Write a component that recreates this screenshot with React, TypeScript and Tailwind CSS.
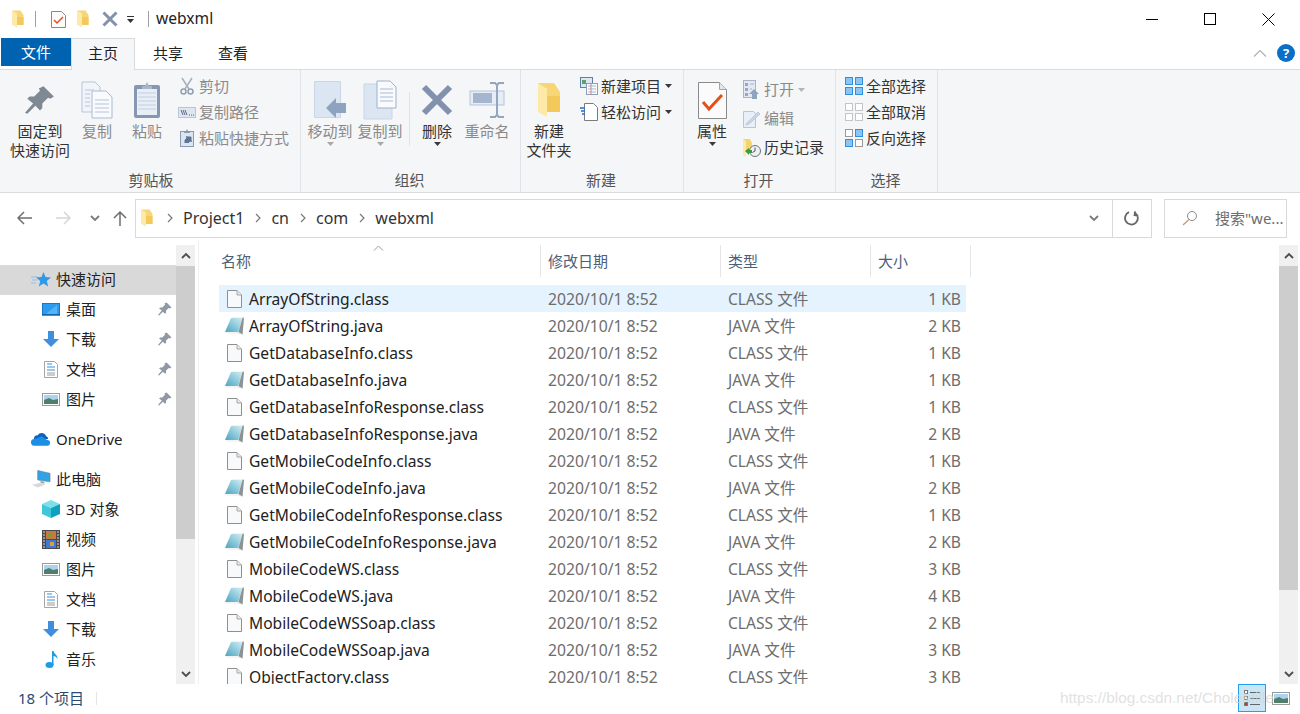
import type { ReactNode } from 'react'

const FONT = "font-['Noto_Sans','Noto_Sans_CJK_SC',sans-serif]"

const FILES = [
  ['ArrayOfString.class', 'CLASS 文件', '1 KB'],
  ['ArrayOfString.java', 'JAVA 文件', '2 KB'],
  ['GetDatabaseInfo.class', 'CLASS 文件', '1 KB'],
  ['GetDatabaseInfo.java', 'JAVA 文件', '1 KB'],
  ['GetDatabaseInfoResponse.class', 'CLASS 文件', '1 KB'],
  ['GetDatabaseInfoResponse.java', 'JAVA 文件', '2 KB'],
  ['GetMobileCodeInfo.class', 'CLASS 文件', '1 KB'],
  ['GetMobileCodeInfo.java', 'JAVA 文件', '2 KB'],
  ['GetMobileCodeInfoResponse.class', 'CLASS 文件', '1 KB'],
  ['GetMobileCodeInfoResponse.java', 'JAVA 文件', '2 KB'],
  ['MobileCodeWS.class', 'CLASS 文件', '3 KB'],
  ['MobileCodeWS.java', 'JAVA 文件', '4 KB'],
  ['MobileCodeWSSoap.class', 'CLASS 文件', '2 KB'],
  ['MobileCodeWSSoap.java', 'JAVA 文件', '3 KB'],
  ['ObjectFactory.class', 'CLASS 文件', '3 KB'],
]

/* ---------- icons ---------- */

function Folder({ w = 12, h = 18 }: { w?: number; h?: number }) {
  return (
    <svg width={w} height={h} viewBox="0 0 24 36">
      <path d="M1 1h16l6 9v20H1z" fill="#f6d675" />
      <path d="M1 1l9 6v28l-9-5z" fill="#fdeaa8" />
      <path d="M10 14h13v16H10z" fill="#f3c95c" />
    </svg>
  )
}

function ClassFile() {
  return (
    <svg width="15" height="18" viewBox="0 0 15 18">
      <path d="M.5.5h9.500l4.500 4.500v12.500H.5z" fill="#f8f9fb" stroke="#8f8f8f" />
      <path d="M10 .5V5h4.500" fill="#e8e8e8" stroke="#a8a8a8" />
    </svg>
  )
}

function JavaFile() {
  return (
    <svg width="20" height="18" viewBox="0 0 20 18">
      <defs>
        <linearGradient id="javaSheet" x1="1" y1="0" x2="0" y2="1">
          <stop offset="0" stopColor="#d4ecf1" />
          <stop offset="0.5" stopColor="#8ccadb" />
          <stop offset="1" stopColor="#4fa3bf" />
        </linearGradient>
      </defs>
      <path d="M7 0.500h12l-1.500 17-15-1.500z" fill="#e6e9ea" />
      <path d="M6 1h11.500L13 15H0z" fill="url(#javaSheet)" />
      <path d="M17.500 1l1.500-.5-1.500 17-4-2.500z" fill="#8b9396" />
      <path d="M0 15h13l.5 2H3z" fill="#f2f4f5" />
    </svg>
  )
}

function Pin({ size = 14, color = '#8f98a3' }: { size?: number; color?: string }) {
  return (
    <svg width={size} height={size} viewBox="0 0 26 26">
      <path d="M16 1l9 9-3 2-2-1-5 5 0 4-2 2-4-4-7 7-2-1 7-8-5-4 2-2 4 0 5-5-1-2z" fill={color} />
    </svg>
  )
}

function CopyDocs() {
  return (
    <svg width="32" height="38" viewBox="0 0 32 38">
      <path d="M1 1h13l5 5v25H1z" fill="#f1f5fa" stroke="#b7c5d9" />
      <path d="M11 10h14l6 6v21H11z" fill="#f8fafd" stroke="#a9bad2" />
      <path d="M4 9h9M4 13h5M4 17h5M4 21h5M4 25h5M14 19h14M14 23h14M14 27h14M14 31h14" stroke="#b4c4da" />
    </svg>
  )
}

function Clipboard() {
  return (
    <svg width="28" height="38" viewBox="0 0 28 38">
      <rect x="1" y="4" width="26" height="33" rx="2" fill="#8696b3" />
      <rect x="4" y="8" width="20" height="26" fill="#e8eef6" />
      <path d="M5 12h18M5 16h18M5 20h18M5 24h18M5 28h18" stroke="#c2cfe1" />
      <path d="M9 5h3l2-4 2 4h3v3H9z" fill="#a9b6ca" />
    </svg>
  )
}

function Scissors() {
  return (
    <svg width="14" height="18" viewBox="0 0 14 18">
      <path d="M2 1l7 11M12 1L5 12" stroke="#a9b2bf" strokeWidth="1.6" fill="none" />
      <circle cx="3.5" cy="14.5" r="2.5" fill="none" stroke="#8f9eb5" strokeWidth="1.5" />
      <circle cx="10.5" cy="14.5" r="2.5" fill="none" stroke="#8f9eb5" strokeWidth="1.5" />
    </svg>
  )
}

function PathIcon() {
  return (
    <svg width="18" height="11" viewBox="0 0 18 11">
      <rect x="0.5" y="0.5" width="17" height="10" fill="#dfe6f1" stroke="#b9c6da" />
      <path d="M3 3l2 5M5 3l2 5M7 3l2 5" stroke="#5d6d84" />
      <path d="M11 8h1M13 8h1M15 8h1" stroke="#5d6d84" />
    </svg>
  )
}

function PasteShortcut() {
  return (
    <svg width="14" height="18" viewBox="0 0 14 18">
      <rect x="0.5" y="2.5" width="13" height="15" fill="#dde5f0" stroke="#8b9ab3" />
      <path d="M4 2h2l1-2 1 2h2v2H4z" fill="#8b9ab3" />
      <path d="M5 14v-3l3-3H6h5v5-2l-3 3" fill="#5e7595" stroke="#5e7595" />
    </svg>
  )
}

function MoveTo() {
  return (
    <svg width="32" height="38" viewBox="0 0 32 38">
      <path d="M.5.5h26v36H.5z" fill="#dce6f3" stroke="#c9d6e8" />
      <path d="M32 22H22v-5L12 27l10 10v-5h10z" fill="#8ea3bf" />
    </svg>
  )
}

function CopyTo() {
  return (
    <svg width="34" height="40" viewBox="0 0 34 40">
      <path d="M1 4h28v35H1z" fill="#dce6f3" stroke="#c9d6e8" />
      <path d="M14 1h13l6 6v21H14z" fill="#f8fafd" stroke="#9fb1ca" />
      <path d="M17 9h13M17 13h13M17 17h13M17 21h13" stroke="#a9bad2" />
    </svg>
  )
}

function DeleteX({ size = 32 }: { size?: number }) {
  return (
    <svg width={size} height={size} viewBox="0 0 32 32">
      <path d="M3 3l26 26M29 3L3 29" stroke="#8291ae" strokeWidth="6" />
    </svg>
  )
}

function Rename() {
  return (
    <svg width="36" height="38" viewBox="0 0 36 38">
      <rect x="1" y="10" width="34" height="14" fill="#e6edf6" stroke="#b6c5da" />
      <rect x="4" y="12" width="19" height="10" fill="#a5b5ce" />
      <path d="M21 2h5l2 2 2-2h5M28 4v30M21 36h5l2-2 2 2h5" stroke="#93a5bf" strokeWidth="2" fill="none" />
    </svg>
  )
}

function NewItem() {
  return (
    <svg width="18" height="18" viewBox="0 0 18 18">
      <rect x="0.5" y="0.5" width="12" height="10" fill="#dbe7f4" stroke="#5f7fa3" />
      <rect x="2" y="3" width="4" height="4" fill="#5f9e6e" />
      <rect x="6.5" y="6.5" width="11" height="11" fill="#fff" stroke="#8f9cb0" />
      <path d="M11 6v12" stroke="#d77" />
      <path d="M8 9h8M8 12h8M8 15h8" stroke="#9db4d4" />
    </svg>
  )
}

function EasyAccess() {
  return (
    <svg width="18" height="18" viewBox="0 0 18 18">
      <path d="M4.5.5h9l4 4v13h-13z" fill="#fff" stroke="#7c7c7c" />
      <path d="M0 5h5M1 8h4M2 11h3" stroke="#2a6fc9" strokeWidth="1.3" />
    </svg>
  )
}

function Properties() {
  return (
    <svg width="29" height="37" viewBox="0 0 29 37">
      <path d="M.5.5h21l7 7v29H.5z" fill="#fbfbfb" stroke="#8a8a8a" />
      <path d="M21.5.5v7h7" fill="#e6e6e6" stroke="#a5a5a5" />
      <path d="M5 20l6 7 13-14" fill="none" stroke="#e2511a" strokeWidth="3" />
    </svg>
  )
}

function OpenIcon() {
  return (
    <svg width="17" height="19" viewBox="0 0 17 19">
      <rect x="0.5" y="0.5" width="12" height="17" fill="#e3e9f2" stroke="#a7b4c7" />
      <path d="M2 3h3v3H2zM2 8h3v3H2zM2 13h3v3H2z" fill="#9aa8bc" />
      <path d="M7 4h4M7 9h2" stroke="#a7b4c7" />
      <path d="M11 9l5 5h-2v5H9v-5H6z" fill="#8ea3bf" />
    </svg>
  )
}

function EditIcon() {
  return (
    <svg width="17" height="18" viewBox="0 0 17 18">
      <path d="M.5 1.500h10l2 2v14H.5z" fill="#e9eff7" stroke="#b6c5da" />
      <path d="M4 13L15 2l2 2L6 14l-3 1z" fill="#c9d6e8" stroke="#a7b8cf" strokeWidth=".6" />
    </svg>
  )
}

function History() {
  return (
    <svg width="18" height="18" viewBox="0 0 18 18">
      <path d="M0 0h7l2 4v9H0z" fill="#f5d36f" />
      <path d="M0 0l3 2v16l-3-2z" fill="#fdeaa8" />
      <circle cx="12" cy="12" r="5.5" fill="#eef1f3" stroke="#6d7378" />
      <path d="M12 8.500V12l-2.500 1.500" stroke="#555" fill="none" />
      <path d="M2 12l4-3v2h3v3H6v2z" fill="#3d9a3c" />
    </svg>
  )
}

function SelectGrid({ on, offColor = '#c4c4c4' }: { on: boolean[]; offColor?: string }) {
  const cells = [
    [0, 0],
    [10, 0],
    [0, 10],
    [10, 10],
  ]
  return (
    <svg width="18" height="18" viewBox="0 0 18 18">
      {cells.map(([x, y], i) => (
        <rect
          key={i}
          x={x + 0.5}
          y={y + 0.5}
          width="7"
          height="7"
          fill={on[i] ? '#8cc4f2' : '#fff'}
          stroke={on[i] ? '#2f8fe0' : offColor}
        />
      ))}
    </svg>
  )
}

function Star() {
  return (
    <svg width="20" height="15" viewBox="0 0 20 15">
      <path d="M0 5h7M1 8h5M0 11h5" stroke="#8fc0e6" />
      <path d="M12.500 0l2 5 5.500.4-4.200 3.500 1.400 5.600-4.700-3-4.700 3 1.400-5.600-4.200-3.500 5.500-.4z" fill="#2f9be8" />
    </svg>
  )
}

function Desktop() {
  return (
    <svg width="18" height="13" viewBox="0 0 18 13">
      <rect x="0.5" y="0.5" width="17" height="11" fill="#2d9cf0" stroke="#1679c7" />
      <path d="M4 11L15 2v9z" fill="#56b3f5" />
      <path d="M0 12h18" stroke="#0f5e9e" strokeWidth="1.4" />
    </svg>
  )
}

function Download() {
  return (
    <svg width="16" height="16" viewBox="0 0 16 16">
      <path d="M5 0h6v8h5l-8 8-8-8h5z" fill="#3f8fde" />
    </svg>
  )
}

function DocIcon() {
  return (
    <svg width="14" height="17" viewBox="0 0 14 17">
      <path d="M.5.5h10l3 3v13H.5z" fill="#fff" stroke="#a5a5a5" />
      <path d="M3 3h5M3 6h8M3 9h8" stroke="#3d8fd6" />
      <path d="M3 12h8M3 14h8" stroke="#9a9a9a" />
    </svg>
  )
}

function Picture() {
  return (
    <svg width="18" height="13" viewBox="0 0 18 13">
      <rect x="0.5" y="0.5" width="17" height="12" fill="#fff" stroke="#9a9a9a" />
      <rect x="2" y="2" width="14" height="5" fill="#a9d3ee" />
      <path d="M2 7l5-2 4 2 5-1v5H2z" fill="#4f7f6b" />
    </svg>
  )
}

function Cloud() {
  return (
    <svg width="21" height="14" viewBox="0 0 21 14">
      <path d="M3 7a4 4 0 0 1 4-4 5 5 0 0 1 9 1 3 3 0 0 1 2 3z" fill="#0f63bd" />
      <path d="M4 14a3.500 3.500 0 0 1-1-7l4-1 4-2 6 4a3 3 0 0 1 3 3 3 3 0 0 1-2 3z" fill="#1b8fe3" />
    </svg>
  )
}

function Computer() {
  return (
    <svg width="21" height="18" viewBox="0 0 21 18">
      <path d="M7 0l13 3v9L7 10z" fill="#2fa3e6" stroke="#6f7f8c" strokeWidth=".6" />
      <path d="M10 11l4 1v2l-4-1z" fill="#9aa5ad" />
      <path d="M1 15l9-2 5 2-8 3z" fill="#d5dadd" />
    </svg>
  )
}

function Cube() {
  return (
    <svg width="18" height="18" viewBox="0 0 18 18">
      <path d="M9 0l9 4-9 4-9-4z" fill="#7be0ea" />
      <path d="M0 4l9 4v10l-9-4z" fill="#3fc6d8" />
      <path d="M18 4L9 8v10l9-4z" fill="#0f9fc0" />
    </svg>
  )
}

function Film() {
  return (
    <svg width="18" height="19" viewBox="0 0 18 19">
      <rect width="18" height="19" fill="#4a4a4a" />
      <path d="M1 2h2M1 5h2M1 8h2M1 11h2M1 14h2M1 17h2M15 2h2M15 5h2M15 8h2M15 11h2M15 14h2M15 17h2" stroke="#ddd" />
      <rect x="4" y="1" width="10" height="8" fill="#c9793c" />
      <rect x="4" y="10" width="10" height="8" fill="#3f78d8" />
      <path d="M6 3h4v4H6z" fill="#7c9a3c" />
      <path d="M8 12h4v4H8z" fill="#d8a03c" />
    </svg>
  )
}

function Music() {
  return (
    <svg width="13" height="17" viewBox="0 0 13 17">
      <ellipse cx="4.500" cy="14" rx="4" ry="3" fill="#1c9be8" />
      <path d="M7 14V0h1.500c.5 3 4.500 4 4 8-1-2-2.500-3-4-3v9z" fill="#1c9be8" />
    </svg>
  )
}

/* ---------- ribbon bits ---------- */

function Caret({ color = '#3a3a3a' }: { color?: string }) {
  return (
    <svg width="7" height="4" viewBox="0 0 7 4">
      <path d="M0 0h7L3.500 4z" fill={color} />
    </svg>
  )
}

function LargeButton({
  icon,
  lines,
  w,
  dim,
  caret,
}: {
  icon: ReactNode
  lines: string[]
  w: string
  dim?: boolean
  caret?: boolean
}) {
  return (
    <div className={`${w} flex shrink-0 flex-col items-center pt-[8px] leading-[19px] ${dim ? 'text-[#8a8a8a]' : 'text-[#333]'}`}>
      <div className="flex h-[44px] items-center justify-center">{icon}</div>
      {lines.map((l) => (
        <div key={l} className="whitespace-nowrap">
          {l}
        </div>
      ))}
      {caret && (
        <div className="mt-[1px] flex">
          <Caret color={dim ? '#a8a8a8' : '#3a3a3a'} />
        </div>
      )}
    </div>
  )
}

function SmallButton({
  icon,
  label,
  h,
  dim,
  caret,
}: {
  icon: ReactNode
  label: string
  h: string
  dim?: boolean
  caret?: 'dark' | 'light'
}) {
  return (
    <div className={`${h} flex items-center whitespace-nowrap ${dim ? 'text-[#8a8a8a]' : 'text-[#333]'}`}>
      <div className="flex w-[22px] shrink-0 items-center justify-center pr-[3px]">{icon}</div>
      {label}
      {caret && (
        <div className="ml-[4px] flex">
          <Caret color={caret === 'dark' ? '#3a3a3a' : '#b5b5b5'} />
        </div>
      )}
    </div>
  )
}

function Group({
  width,
  label,
  labelClass = 'pr-[2px]',
  children,
}: {
  width: string
  label: string
  labelClass?: string
  children: ReactNode
}) {
  return (
    <div className={`${width} flex shrink-0 flex-col border-r border-[#e1e3e6]`}>
      <div className="flex h-[98px] items-start">{children}</div>
      <div className={`flex h-[24px] items-center justify-center text-[#555] ${labelClass}`}>{label}</div>
    </div>
  )
}

function Ribbon() {
  return (
    <div className="flex h-[124px] shrink-0 border-y border-[#dadbdc] bg-[#f5f6f7]">
      <Group width="w-[301px]" label="剪贴板" labelClass="pl-[2px]">
        <div className="ml-[5px]" />
        <LargeButton w="w-[70px]" icon={<Pin size={30} color="#7f8994" />} lines={['固定到', '快速访问']} />
        <LargeButton w="w-[44px]" icon={<CopyDocs />} lines={['复制']} dim />
        <LargeButton w="w-[56px]" icon={<Clipboard />} lines={['粘贴']} dim />
        <div className="ml-[2px] pt-[3px]">
          <SmallButton h="h-[26px]" icon={<Scissors />} label="剪切" dim />
          <SmallButton h="h-[26px]" icon={<PathIcon />} label="复制路径" dim />
          <SmallButton h="h-[26px]" icon={<PasteShortcut />} label="粘贴快捷方式" dim />
        </div>
      </Group>
      <Group width="w-[220px]" label="组织">
        <div className="ml-[4px]" />
        <LargeButton w="w-[50px]" icon={<MoveTo />} lines={['移动到']} dim caret />
        <LargeButton w="w-[50px]" icon={<CopyTo />} lines={['复制到']} dim caret />
        <div className="ml-[4px] mr-[2px] mt-[22px] h-[54px] w-px bg-[#e1e3e6]" />
        <LargeButton w="w-[50px]" icon={<DeleteX />} lines={['删除']} caret />
        <LargeButton w="w-[50px]" icon={<Rename />} lines={['重命名']} dim />
      </Group>
      <Group width="w-[163px]" label="新建">
        <div className="ml-[3px]" />
        <LargeButton w="w-[50px]" icon={<Folder w={24} h={36} />} lines={['新建', '文件夹']} />
        <div className="ml-[5px] pt-[3px]">
          <SmallButton h="h-[26px]" icon={<NewItem />} label="新建项目" caret="dark" />
          <SmallButton h="h-[26px]" icon={<EasyAccess />} label="轻松访问" caret="dark" />
        </div>
      </Group>
      <Group width="w-[152px]" label="打开">
        <div className="ml-[3px]" />
        <LargeButton w="w-[50px]" icon={<Properties />} lines={['属性']} caret />
        <div className="ml-[5px] pt-[5px]">
          <SmallButton h="h-[29px]" icon={<OpenIcon />} label="打开" dim caret="light" />
          <SmallButton h="h-[29px]" icon={<EditIcon />} label="编辑" dim />
          <SmallButton h="h-[29px]" icon={<History />} label="历史记录" />
        </div>
      </Group>
      <Group width="w-[102px]" label="选择">
        <div className="ml-[8px] pt-[3px]">
          <SmallButton h="h-[26px]" icon={<SelectGrid on={[true, true, true, true]} />} label="全部选择" />
          <SmallButton h="h-[26px]" icon={<SelectGrid on={[false, false, false, false]} />} label="全部取消" />
          <SmallButton h="h-[26px]" icon={<SelectGrid on={[false, true, true, false]} offColor="#9a9a9a" />} label="反向选择" />
        </div>
      </Group>
    </div>
  )
}

function Chevron({ up, color = '#4d4d4d' }: { up?: boolean; color?: string }) {
  return (
    <svg width="10" height="7" viewBox="0 0 10 7">
      <path d={up ? 'M1 6l4-4 4 4' : 'M1 1l4 4 4-4'} fill="none" stroke={color} strokeWidth="1.800" />
    </svg>
  )
}

function Crumb({ label }: { label: string }) {
  return (
    <>
      <svg width="6" height="10" viewBox="0 0 6 10" className="mx-[6.5px]">
        <path d="M1 1l4 4-4 4" fill="none" stroke="#7a7a7a" strokeWidth="1.200" />
      </svg>
      <span className="mx-[4px] text-[16px] text-[#333]">{label}</span>
    </>
  )
}

function AddressBar() {
  return (
    <div className="flex h-[47px] shrink-0 items-center pt-[3px]">
      <svg width="16" height="14" viewBox="0 0 16 14" className="ml-[17px]">
        <path d="M15 7H2M7 1L1 7l6 6" fill="none" stroke="#6d6d6d" strokeWidth="1.500" />
      </svg>
      <svg width="16" height="14" viewBox="0 0 16 14" className="ml-[22px]">
        <path d="M1 7h13M9 1l6 6-6 6" fill="none" stroke="#d6d6d6" strokeWidth="1.500" />
      </svg>
      <div className="ml-[19px] flex">
        <Chevron color="#7a7a7a" />
      </div>
      <svg width="14" height="16" viewBox="0 0 14 16" className="ml-[13px]">
        <path d="M7 16V2M1 8l6-6 6 6" fill="none" stroke="#6d6d6d" strokeWidth="1.500" />
      </svg>
      <div className="ml-[8px] flex h-[39px] w-[1017px] items-center border border-[#d9d9d9] pl-[5px]">
        <Folder w={12} h={18} />
        <div className="ml-[7px] flex items-center">
          <Crumb label="Project1" />
          <Crumb label="cn" />
          <Crumb label="com" />
          <Crumb label="webxml" />
        </div>
        <div className="ml-auto mr-[13px] flex">
          <Chevron color="#7a7a7a" />
        </div>
        <div className="flex h-full w-[39px] items-center justify-center border-l border-[#d9d9d9]">
          <svg width="16" height="16" viewBox="0 0 15 15">
            <path d="M4 2.500a6 6 0 1 0 6 0M9.500 1v3.500h3.500" fill="none" stroke="#666" strokeWidth="1.700" transform="rotate(8 7.500 7.500)" />
          </svg>
        </div>
      </div>
      <div className="ml-[12px] flex h-[39px] w-[123px] items-center overflow-hidden border border-[#d9d9d9] pl-[17px] text-[#6d6d6d]">
        <svg width="16" height="16" viewBox="0 0 16 16" className="mr-[17px] shrink-0">
          <circle cx="10" cy="6" r="4.500" fill="none" stroke="#8a8a8a" />
          <path d="M7 9.500L1 15" stroke="#c39a6d" strokeWidth="1.200" />
        </svg>
        <span className="whitespace-nowrap">搜索"we...</span>
      </div>
    </div>
  )
}

function NavRow({
  icon,
  label,
  indent,
  pinned,
  active,
  mb,
}: {
  icon: ReactNode
  label: string
  indent: 'top' | 'child'
  pinned?: boolean
  active?: boolean
  mb?: string
}) {
  return (
    <div className={`flex h-[30px] items-center pb-[2px] text-[#222] ${mb ?? ''} ${active ? 'bg-[#d9d9d9]' : ''} ${indent === 'top' ? 'pl-[31px]' : 'pl-[41px]'}`}>
      <div className="flex w-[25px] shrink-0 items-center justify-center pr-[5px]">{icon}</div>
      <span className="whitespace-nowrap">{label}</span>
      {pinned && (
        <div className="ml-auto mr-[4px] flex">
          <Pin />
        </div>
      )}
    </div>
  )
}

function Scrollbar({ thumb }: { thumb: string }) {
  return (
    <div className="flex h-full w-[19px] shrink-0 flex-col bg-[#f0f0f0]">
      <div className="flex h-[21px] shrink-0 items-center justify-center">
        <Chevron up />
      </div>
      <div className={`${thumb} shrink-0 bg-[#cdcdcd]`} />
      <div className="flex-1" />
      <div className="flex h-[20px] shrink-0 items-center justify-center">
        <Chevron />
      </div>
    </div>
  )
}

function NavPane() {
  return (
    <div className="flex w-[199px] shrink-0 border-r border-[#f0f0f0] pt-[5px]">
      <div className="w-[176px] shrink-0 pt-[20px]">
        <NavRow icon={<Star />} label="快速访问" indent="top" active />
        <NavRow icon={<Desktop />} label="桌面" indent="child" pinned />
        <NavRow icon={<Download />} label="下载" indent="child" pinned />
        <NavRow icon={<DocIcon />} label="文档" indent="child" pinned />
        <NavRow icon={<Picture />} label="图片" indent="child" pinned mb="mb-[10px]" />
        <NavRow icon={<Cloud />} label="OneDrive" indent="top" mb="mb-[10px]" />
        <NavRow icon={<Computer />} label="此电脑" indent="top" />
        <NavRow icon={<Cube />} label="3D 对象" indent="child" />
        <NavRow icon={<Film />} label="视频" indent="child" />
        <NavRow icon={<Picture />} label="图片" indent="child" />
        <NavRow icon={<DocIcon />} label="文档" indent="child" />
        <NavRow icon={<Download />} label="下载" indent="child" />
        <NavRow icon={<Music />} label="音乐" indent="child" />
      </div>
      <Scrollbar thumb="h-[273px]" />
    </div>
  )
}

function HeaderCell({ label, width }: { label: string; width: string }) {
  return (
    <div className={`${width} flex h-[32px] shrink-0 items-center border-r border-[#e5e5e5] pl-[7px] text-[#4c607a]`}>
      {label}
    </div>
  )
}

function FileList() {
  return (
    <div className="relative min-w-0 flex-1 overflow-hidden pt-[5px]">
      <div className="ml-[15px] flex">
        <HeaderCell label="名称" width="w-[327px]" />
        <HeaderCell label="修改日期" width="w-[180px]" />
        <HeaderCell label="类型" width="w-[150px]" />
        <HeaderCell label="大小" width="w-[100px]" />
      </div>
      <svg width="11" height="6" viewBox="0 0 11 6" className="absolute left-[174px] top-[5px]">
        <path d="M1 5.500l4.500-4.500 4.500 4.500" fill="none" stroke="#9a9a9a" />
      </svg>
      <div className="ml-[20px] mt-[8px] w-[747px]">
        {FILES.map(([name, type, size], i) => (
          <div key={name} className={`flex h-[27px] items-center ${i === 0 ? 'bg-[#e5f3ff]' : ''}`}>
            <div className="flex w-[30px] shrink-0 justify-center pl-[1px]">
              {name.endsWith('.class') ? <ClassFile /> : <JavaFile />}
            </div>
            <div className="w-[299px] shrink-0 whitespace-nowrap pt-[2px] text-[15.6px] text-[#222]">{name}</div>
            <div className="w-[180px] shrink-0 whitespace-nowrap pt-[2px] text-[15.7px] text-[#6d6d6d]">2020/10/1 8:52</div>
            <div className="w-[133px] shrink-0 whitespace-nowrap pt-[2px] text-[15.6px] text-[#6d6d6d]">{type}</div>
            <div className="w-[100px] shrink-0 whitespace-nowrap pt-[2px] text-right text-[15.6px] text-[#6d6d6d]">{size}</div>
          </div>
        ))}
      </div>
    </div>
  )
}

export default function App() {
  return (
    <div className={`relative flex h-[714px] w-[1300px] flex-col overflow-hidden bg-white text-[15px] ${FONT}`}>
      {/* Title bar */}
      <div className="flex h-[38px] shrink-0 items-center">
        <div className="ml-[12px] flex">
          <Folder />
        </div>
        <div className="ml-[11px] h-[16px] w-px bg-[#a0a0a0]" />
        <div className="ml-[15px] flex">
          <svg width="15" height="17" viewBox="0 0 15 17">
            <path d="M.5.5h10l4 4v12H.5z" fill="#fbfbfb" stroke="#8a8a8a" />
            <path d="M3 9l3 3 6-6" fill="none" stroke="#e2511a" strokeWidth="1.500" />
          </svg>
        </div>
        <div className="ml-[11px] flex">
          <Folder />
        </div>
        <div className="ml-[13px] flex">
          <DeleteX size={16} />
        </div>
        <div className="ml-[9px] flex flex-col items-center gap-[2px]">
          <div className="h-px w-[7px] bg-[#333]" />
          <Caret color="#333" />
        </div>
        <div className="ml-[14px] h-[16px] w-px bg-[#a0a0a0]" />
        <span className="ml-[7px] text-[15.6px] text-[#222]">webxml</span>
        <div className="ml-auto mr-[25px] flex items-center gap-[46px]">
          <div className="h-px w-[12px] bg-black" />
          <div className="h-[12px] w-[12px] border border-black" />
          <svg width="13" height="13" viewBox="0 0 13 13">
            <path d="M.5.5l12 12M12.500.5l-12 12" stroke="#000" />
          </svg>
        </div>
      </div>

      {/* Tabs */}
      <div className="-mb-px flex h-[32px] shrink-0 items-start">
        <div className="ml-[1px] flex h-[28px] w-[70px] items-center justify-center bg-[#0063b1] text-white">文件</div>
        <div className="z-10 flex h-[32px] w-[64px] items-center justify-center border-x border-t border-[#dadbdc] bg-[#f5f6f7] pb-[3px] text-[#222]">主页</div>
        <div className="flex h-[28px] w-[65px] items-center justify-center pl-[1px] pt-[3px] text-[#222]">共享</div>
        <div className="flex h-[28px] w-[66px] items-center justify-center pt-[3px] text-[#222]">查看</div>
        <div className="ml-auto mr-[5px] flex items-center gap-[10px] pt-[6px]">
          <svg width="14" height="8" viewBox="0 0 14 8">
            <path d="M1 7.500l6-6 6 6" fill="none" stroke="#b0b0b0" strokeWidth="1.200" />
          </svg>
          <div className="flex h-[18px] w-[18px] items-center justify-center rounded-full bg-[#0a6fc9] text-[13px] font-bold leading-none text-white">?</div>
        </div>
      </div>

      <Ribbon />
      <AddressBar />

      {/* Main */}
      <div className="flex min-h-0 flex-1 pr-[2px]">
        <NavPane />
        <FileList />
        <div className="pt-[5px]">
          <Scrollbar thumb="h-[324px]" />
        </div>
      </div>

      {/* Status bar */}
      <div className="flex h-[30px] shrink-0 items-start text-[#2b4b70]">
        <span className="ml-[18px] leading-[28px]">18 个项目</span>
        <div className="ml-[12px] mt-[8px] h-[13px] w-px bg-[#e5e5e5]" />
        <div className="ml-auto mr-[10px] flex items-center gap-[6px]">
          <div className="flex h-[28px] w-[28px] flex-col items-center justify-center gap-[2px] border border-[#26a0ee] bg-[#c9e6f7]">
            {[0, 1, 2].map((i) => (
              <div key={i} className="flex items-center gap-[2px]">
                <div className={`h-[4px] w-[4px] border border-[#777] ${i === 2 ? 'bg-[#c0392b]' : 'bg-white'}`} />
                <div className="h-px w-[10px] bg-[#666]" />
              </div>
            ))}
          </div>
          <Picture />
        </div>
      </div>

      <div className="pointer-events-none absolute left-[1060px] top-[686px] whitespace-nowrap font-['Liberation_Sans',sans-serif] text-[15.4px] text-[#d4d4d4]/70">
        https://blog.csdn.net/CholeMille
      </div>
    </div>
  )
}
